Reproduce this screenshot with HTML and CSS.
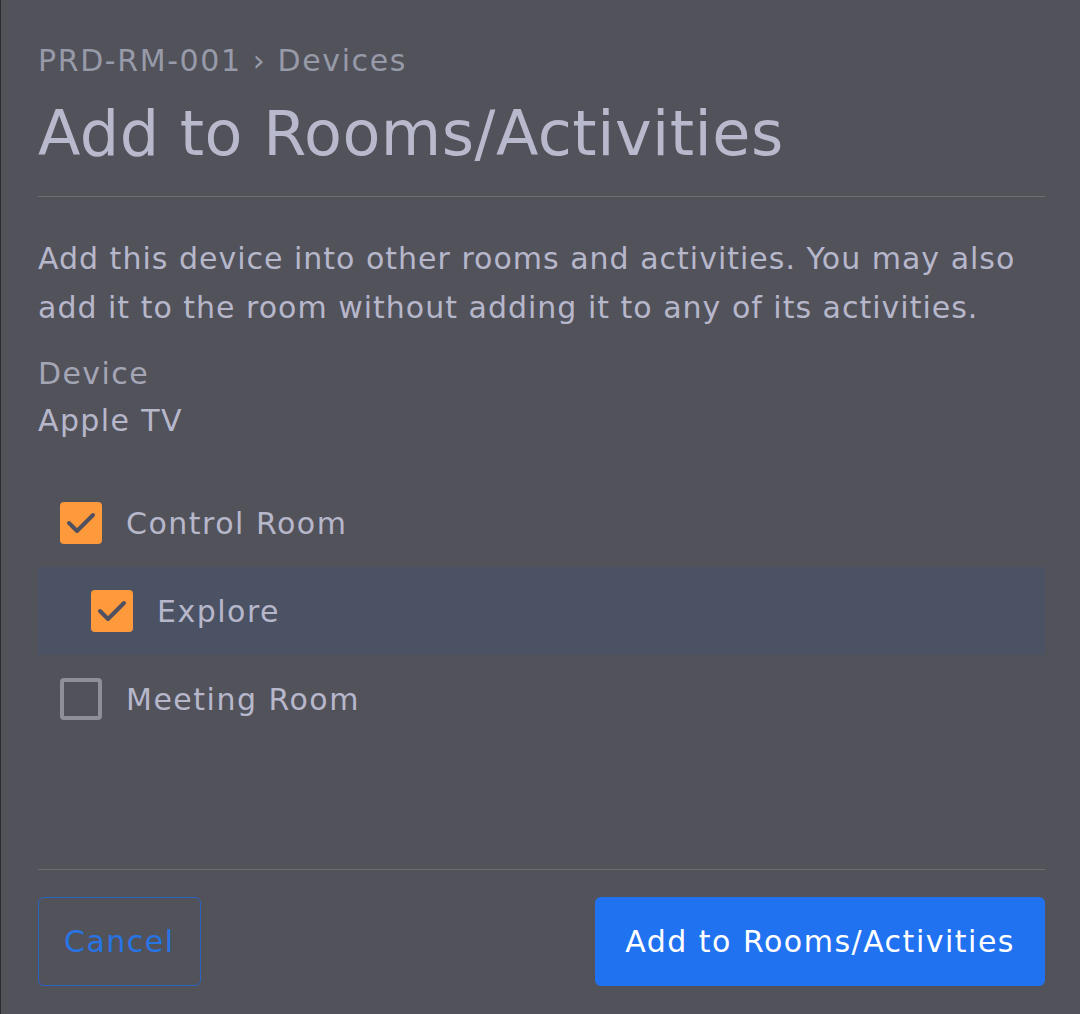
FILE: index.html
```html
<!DOCTYPE html>
<html>
<head>
<meta charset="utf-8">
<link rel="stylesheet" href="styles.css">
</head>
<body>
<div class="panel">
  <div class="crumb">PRD-RM-001 › Devices</div>
  <h1 class="title">Add to Rooms/Activities</h1>
  <div class="divider"></div>
  <p class="desc">Add this device into other rooms and activities. You may also add it to the room without adding it to any of its activities.</p>
  <div class="field-label">Device</div>
  <div class="field-value">Apple TV</div>
  <div class="list">
    <div class="row">
      <span class="box checked"><svg viewBox="0 0 42 42" width="42" height="42"><path d="M9 21 L17 29 L33 13" fill="none" stroke="#4f5160" stroke-width="4" stroke-linecap="round" stroke-linejoin="round"/></svg></span>
      <span class="label">Control Room</span>
    </div>
    <div class="row sub active">
      <span class="box checked"><svg viewBox="0 0 42 42" width="42" height="42"><path d="M9 21 L17 29 L33 13" fill="none" stroke="#4f5160" stroke-width="4" stroke-linecap="round" stroke-linejoin="round"/></svg></span>
      <span class="label">Explore</span>
    </div>
    <div class="row">
      <span class="box"></span>
      <span class="label">Meeting Room</span>
    </div>
  </div>
  <div class="spacer"></div>
  <div class="divider bottom"></div>
  <div class="actions">
    <button class="btn cancel">Cancel</button>
    <button class="btn primary">Add to Rooms/Activities</button>
  </div>
</div>
</body>
</html>
```
FILE: styles.css
```css
html, body {
  margin: 0;
  padding: 0;
  background: #52525b;
  height: 100%;
}
body {
  font-family: "DejaVu Sans", sans-serif;
  color: #b7b7cb;
  border-left: 1px solid #2a2a30;
  box-sizing: border-box;
}
.panel {
  padding: 40px 35px 28px 37px;
  display: flex;
  flex-direction: column;
  height: 1014px;
  box-sizing: border-box;
}
.crumb {
  font-size: 30px;
  letter-spacing: 1.6px;
  color: #979aa8;
  line-height: 42px;
}
.title {
  font-weight: normal;
  font-size: 62px;
  letter-spacing: 0.5px;
  line-height: 80px;
  margin: 12px 0 22px;
  color: #b9b9cd;
}
.divider {
  height: 1px;
  background: #6c6c72;
}
.desc {
  font-size: 30px;
  letter-spacing: 1px;
  line-height: 49px;
  margin: 37px 0 0;
}
.field-label {
  font-size: 30px;
  letter-spacing: 1.4px;
  line-height: 47px;
  margin-top: 18px;
  color: #a4a5b5;
}
.field-value {
  font-size: 30px;
  letter-spacing: 1.4px;
  line-height: 47px;
}
.list {
  margin-top: 35px;
}
.row {
  height: 88px;
  display: flex;
  align-items: center;
  padding-left: 22px;
  gap: 24px;
}
.row.sub {
  padding-left: 53px;
}
.row.active {
  background: #4b5264;
}
.box {
  width: 42px;
  height: 42px;
  box-sizing: border-box;
  border: 4px solid #8f8f99;
  border-radius: 4px;
  display: flex;
  flex: none;
}
.box.checked {
  border: none;
  background: #ff9a3c;
}
.label {
  font-size: 30px;
  letter-spacing: 1.5px;
}
.spacer {
  flex: 1;
}
.actions {
  display: flex;
  justify-content: space-between;
  margin-top: 27px;
}
.btn {
  font-family: "DejaVu Sans", sans-serif;
  font-size: 30px;
  letter-spacing: 1.5px;
  height: 89px;
  border-radius: 6px;
  padding: 0 25px;
}
.cancel {
  background: transparent;
  border: 1px solid #2a63c0;
  color: #2774e6;
}
.primary {
  background: #2072f0;
  border: none;
  color: #ffffff;
  padding: 0 30px;
}
```
